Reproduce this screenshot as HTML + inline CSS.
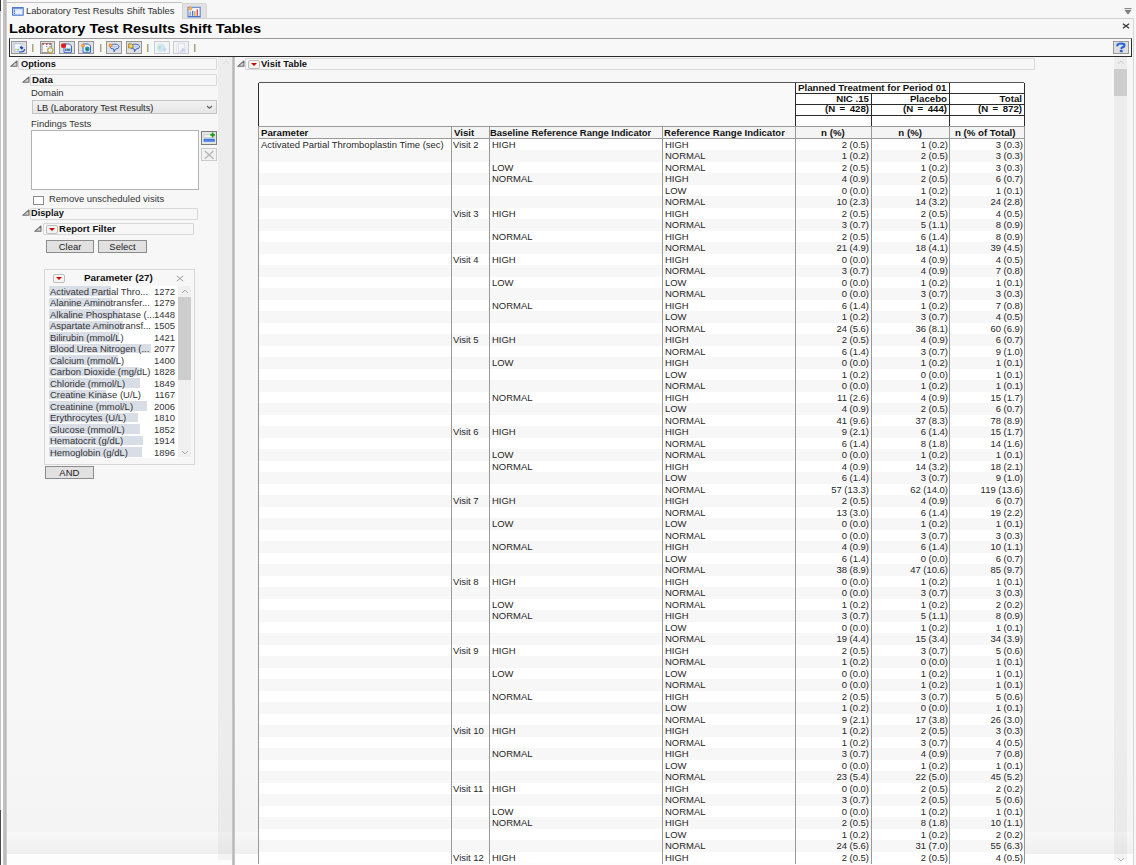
<!DOCTYPE html>
<html><head><meta charset="utf-8"><title>Laboratory Test Results Shift Tables</title>
<style>
html,body{margin:0;padding:0;}
body{width:1136px;height:865px;overflow:hidden;position:relative;background:#f7f7f7;font-family:"Liberation Sans",sans-serif;}
body div{position:absolute;}
body div div, body div svg{position:absolute;}
.t,.b{white-space:nowrap;font-size:8.8px;line-height:11.5px;transform:scaleX(1.075);transform-origin:0 0;}
.b{font-weight:bold;font-size:9px;color:#111;}
.r{transform-origin:100% 0;}
.c{transform-origin:50% 0;}
</style></head><body>
<div style="left:0px;top:0px;width:1.2px;height:865px;background:#c2c2c2"></div>
<div style="left:0px;top:0px;width:1.2px;height:11px;background:#3a3a3a"></div>
<div style="left:0px;top:810px;width:1.2px;height:55px;background:#4a4a4a"></div>
<div style="left:1.2px;top:0px;width:1.8px;height:865px;background:#fdfdfd"></div>
<div style="left:3px;top:0px;width:3.6px;height:865px;background:linear-gradient(90deg,#c6c6c6,#b9b9b9 60%,#d6d6d6)"></div>
<div style="left:6.6px;top:700px;width:1126.4px;height:154px;background:linear-gradient(#f7f7f7,#f4f4f4 86%,#f8f8f8 86%,#efefef)"></div>
<div style="left:6.6px;top:854px;width:1126.4px;height:11px;background:#fdfdfd"></div>
<div style="left:7px;top:2.1px;width:175px;height:16.2px;background:#f8f8f8;border-top:1.5px solid #c2c2c2;box-sizing:border-box"></div>
<div style="left:182px;top:3.2px;width:24.6px;height:15.1px;background:#e2e2e2;border-radius:0 3px 0 0;border:1px solid #d4d4d4;border-bottom:none;box-sizing:border-box"></div>
<div style="left:182px;top:18px;width:952px;height:1px;background:#d0d0d0"></div>
<div style="left:1133px;top:18px;width:1.2px;height:847px;background:#d8d8d8"></div>
<div style="left:12px;top:6.8px"><svg width="12" height="9" viewBox="0 0 12 9"><rect x="0.6" y="0.6" width="10.6" height="7.6" fill="#dce6fa" stroke="#3a6cd0" stroke-width="1"/><rect x="1.1" y="1.1" width="9.6" height="0.9" fill="#6a92dc"/><path d="M2.4 2.6 V7" stroke="#2a4ca0" stroke-width="0.9" stroke-dasharray="1 0.6"/><path d="M4 4.2 H10 M4 6 H10" stroke="#ffffff" stroke-width="0.6"/></svg></div>
<div class="t" style="left:26.2px;top:5.9px;color:#333;transform:scaleX(1.06)">Laboratory Test Results Shift Tables</div>
<div style="left:186.5px;top:5.5px"><svg width="14" height="12" viewBox="0 0 14 12"><rect x="1" y="1.3" width="12.2" height="9.6" fill="#f2f6ff" stroke="#5a86d6" stroke-width="1.1"/><rect x="1" y="9.9" width="12.2" height="1.1" fill="#4a76cc"/><rect x="2.6" y="5.5" width="1.3" height="4.3" fill="#9a9a9a"/><rect x="4.9" y="4.8" width="1.4" height="5" fill="#3a78e0"/><rect x="7.1" y="5.2" width="1.4" height="4.6" fill="#d8a830"/><rect x="9.6" y="3.4" width="1.4" height="6.4" fill="#e04848"/><circle cx="3.3" cy="2.6" r="2" fill="#f4a040"/><circle cx="3.3" cy="2.6" r="0.7" fill="#ffe0b0"/></svg></div>
<div style="left:1124px;top:8px"><svg width="8" height="7" viewBox="0 0 8 7"><rect x="0.5" y="0" width="7" height="1.2" fill="#8a8a8a"/><path d="M0.5 2 L7.5 2 L4 6.7 Z" fill="#808080"/></svg></div>
<div style="left:1121.5px;top:22.5px"><svg width="8" height="6" viewBox="0 0 8 6"><path d="M0.9 0.7 L7.1 5.3 M7.1 0.7 L0.9 5.3" stroke="#3a3a3a" stroke-width="1.35"/></svg></div>
<div class="b" style="left:9px;top:20.7px;font-size:12px;line-height:16px;transform:scaleX(1.218);color:#000">Laboratory Test Results Shift Tables</div>
<div style="left:9px;top:38.3px;width:1123px;height:18.7px;border:1px solid #2a2a2a;border-top:1.7px solid #9a9a9a;border-bottom:1.4px solid #2a2a2a;box-sizing:border-box;background:#f8f8f8"></div>
<div style="left:11.3px;top:41.1px;width:15.6px;height:12.6px;box-sizing:border-box;border:1.2px solid #969696;background:#e1e1e1"><svg width="16" height="13" viewBox="0 0 16 13" style="position:absolute;left:-1.2px;top:-1.2px"><rect x="3" y="2.5" width="8" height="8" fill="#dfe8f8" stroke="#a8bde6" stroke-width="0.7"/><path d="M4 4.5 H10 M4 6.5 H10 M6 3 V10" stroke="#ffffff" stroke-width="0.8"/><rect x="4.2" y="8" width="1.6" height="1.2" fill="#e8c850"/><rect x="6" y="8" width="2" height="1.2" fill="#7cd07a"/><path d="M10 5 L12.5 6.8 L10.8 8.6 L8.6 6.8 Z" fill="#1840b0"/><path d="M13.5 8 Q13.5 11 10 11 L8 11" fill="none" stroke="#2050c0" stroke-width="1.1"/></svg></div>
<div style="left:32.1px;top:43.5px;width:1.1px;height:8px;background:#d49a40;box-shadow:1px 0 0 #a8d8ff"></div>
<div style="left:39.5px;top:41.1px;width:15.6px;height:12.6px;box-sizing:border-box;border:1.2px solid #969696;background:#e1e1e1"><svg width="16" height="13" viewBox="0 0 16 13" style="position:absolute;left:-1.2px;top:-1.2px"><rect x="3" y="2.5" width="9.5" height="9" fill="#f6f6f6" stroke="#8a8a8a" stroke-width="0.8"/><rect x="3.5" y="2.2" width="1.6" height="1.6" fill="#b04040"/><rect x="7" y="2.2" width="1.6" height="1.6" fill="#b04040"/><rect x="10.3" y="2.2" width="1.6" height="1.6" fill="#b04040"/><circle cx="7.8" cy="5.5" r="0.6" fill="#2a70e0"/><circle cx="11" cy="5.5" r="0.6" fill="#2a70e0"/><circle cx="11.3" cy="9.3" r="2.6" fill="#d8f0ff" stroke="#c8a030" stroke-width="1.1"/></svg></div>
<div style="left:59.1px;top:41.1px;width:15.6px;height:12.6px;box-sizing:border-box;border:1.2px solid #969696;background:#e1e1e1"><svg width="16" height="13" viewBox="0 0 16 13" style="position:absolute;left:-1.2px;top:-1.2px"><path d="M5 3 H10.5 L12.5 5 V11.3 H5 Z" fill="#eef4ff" stroke="#2a58c0" stroke-width="0.9"/><rect x="6" y="7.6" width="5.5" height="2.2" fill="#3a6ad0"/><circle cx="7.2" cy="8.7" r="0.6" fill="#f0c020"/><rect x="8.4" y="8.1" width="2.2" height="1.2" rx="0.6" fill="#20b020"/><rect x="2.2" y="2.4" width="4.8" height="4.4" rx="0.8" fill="#e01818"/></svg></div>
<div style="left:78.1px;top:41.1px;width:15.6px;height:12.6px;box-sizing:border-box;border:1.2px solid #969696;background:#e1e1e1"><svg width="16" height="13" viewBox="0 0 16 13" style="position:absolute;left:-1.2px;top:-1.2px"><path d="M5 3 H10.5 L12.5 5 V11.3 H5 Z" fill="#eef4ff" stroke="#2a58c0" stroke-width="0.9"/><circle cx="9.3" cy="8" r="2.4" fill="#2a90e0"/><path d="M8 6.5 Q9.5 6 10.5 7.5 L10 10 Q8.5 9.5 8 8 Z" fill="#1a9050"/><circle cx="5" cy="4.6" r="1.9" fill="#f29030"/><circle cx="5" cy="4.6" r="0.7" fill="#ffe0a0"/></svg></div>
<div style="left:99.5px;top:43.5px;width:1.1px;height:8px;background:#d49a40;box-shadow:1px 0 0 #a8d8ff"></div>
<div style="left:106.3px;top:41.1px;width:15.6px;height:12.6px;box-sizing:border-box;border:1.2px solid #969696;background:#e1e1e1"><svg width="16" height="13" viewBox="0 0 16 13" style="position:absolute;left:-1.2px;top:-1.2px"><path d="M4 5.5 Q4 3.2 8.5 3.2 Q13 3.2 13 5.8 Q13 8 9.5 8 L8 10.8 L7.8 8 Q4 8 4 5.5 Z" fill="#d6e6fa" stroke="#2a58c0" stroke-width="0.9"/><path d="M6 5.8 H11" stroke="#8fb0e8" stroke-width="0.7"/><circle cx="4.6" cy="4.4" r="1.9" fill="#f28a30"/><circle cx="4.6" cy="4.4" r="0.7" fill="#ffd8a0"/></svg></div>
<div style="left:126px;top:41.1px;width:15.6px;height:12.6px;box-sizing:border-box;border:1.2px solid #969696;background:#e1e1e1"><svg width="16" height="13" viewBox="0 0 16 13" style="position:absolute;left:-1.2px;top:-1.2px"><path d="M4.5 5.5 Q4.5 3.2 9 3.2 Q13.5 3.2 13.5 5.8 Q13.5 8 10 8 L8.5 10.8 L8.3 8 Q4.5 8 4.5 5.5 Z" fill="#d6e6fa" stroke="#2a58c0" stroke-width="0.9"/><path d="M7 5.8 H12" stroke="#8fb0e8" stroke-width="0.7"/><path d="M2.6 2.8 H5.8 L7 4 V7 H2.6 Z" fill="#f0d060" stroke="#8a6a10" stroke-width="0.7"/></svg></div>
<div style="left:146.5px;top:43.5px;width:1.1px;height:8px;background:#d49a40;box-shadow:1px 0 0 #a8d8ff"></div>
<div style="left:154.2px;top:41.1px;width:15.6px;height:12.6px;box-sizing:border-box;border:1.2px solid #c9ccd0;background:#f3f3f3"><svg width="16" height="13" viewBox="0 0 16 13" style="position:absolute;left:-1.2px;top:-1.2px"><circle cx="7" cy="6.8" r="4.3" fill="#cde8f2"/><path d="M4 5 Q6 4 7 6 L5.5 9 Z" fill="#b8dcc0"/><path d="M8.5 7.5 H13 L11.3 9.5 V11 H10.2 V9.5 Z" fill="#c6d2f0"/></svg></div>
<div style="left:173.1px;top:41.1px;width:15.6px;height:12.6px;box-sizing:border-box;border:1.2px solid #c9ccd0;background:#f3f3f3"><svg width="16" height="13" viewBox="0 0 16 13" style="position:absolute;left:-1.2px;top:-1.2px"><rect x="5.3" y="2.5" width="6" height="8.5" fill="#f4f6fc" stroke="#d0d8ec" stroke-width="0.7"/><path d="M7 10.5 L10 6.5 L13 10.5 Z" fill="#c8d2ee"/><path d="M3.5 3 V11 M13.8 3 V11" stroke="#e2e2e2" stroke-width="0.6"/></svg></div>
<div style="left:194.1px;top:43.5px;width:1.1px;height:8px;background:#d49a40;box-shadow:1px 0 0 #a8d8ff"></div>
<div style="left:1112.9px;top:40.9px;width:15.9px;height:12.9px;box-sizing:border-box;border:1.2px solid #9a9a9a;background:#e0e0e0"><svg width="16" height="13" viewBox="0 0 16 13" style="position:absolute;left:-1.2px;top:-1.2px"><path d="M4.2 4.5 Q4.8 2.5 8.1 2.5 Q11.7 2.5 11.5 4.5 Q11.3 6 8.7 6.8 L8.5 7.4" fill="none" stroke="#2a62d8" stroke-width="2.1" stroke-linecap="round"/><rect x="6.8" y="9.1" width="2.9" height="2.1" rx="0.5" fill="#2a62d8"/></svg></div>
<div style="left:217.7px;top:57px;width:14.1px;height:803px;background:rgba(0,0,0,0.038)"></div>
<div style="left:222px;top:60px"><svg width="8" height="5" viewBox="0 0 8 5"><path d="M1 4 L4 1 L7 4" fill="none" stroke="#dcdcdc" stroke-width="1"/></svg></div>
<div style="left:231.8px;top:57px;width:3.4px;height:808px;background:linear-gradient(90deg,#d4d4d4,#b4b4b4 40%,#bababa 70%,#dcdcdc)"></div>
<div style="left:18.2px;top:58.2px;width:199.3px;height:12px;border:1px solid #d8d8d8;border-radius:1px;box-sizing:border-box"></div>
<div style="left:10.3px;top:60.1px"><svg width="8" height="7" viewBox="0 0 8 7"><path d="M0.7 6.3 L7 6.3 L7 0.9 Z" fill="#cfcfcf" stroke="#6e6e6e" stroke-width="1.05" stroke-linejoin="round"/></svg></div>
<div class="b" style="left:20.7px;top:58.800000000000004px;transform:scaleX(1.025)">Options</div>
<div style="left:30.4px;top:74.2px;width:187.1px;height:12px;border:1px solid #d8d8d8;border-radius:1px;box-sizing:border-box"></div>
<div style="left:21.5px;top:76.10000000000001px"><svg width="8" height="7" viewBox="0 0 8 7"><path d="M0.7 6.3 L7 6.3 L7 0.9 Z" fill="#cfcfcf" stroke="#6e6e6e" stroke-width="1.05" stroke-linejoin="round"/></svg></div>
<div class="b" style="left:31.9px;top:74.8px;transform:scaleX(1.075)">Data</div>
<div class="t" style="left:31px;top:87.6px;color:#333">Domain</div>
<div style="left:32px;top:100.2px;width:185px;height:13.8px;border:1px solid #c4c4c4;box-sizing:border-box;background:linear-gradient(#f2f2f2,#e6e6e6)"></div>
<div class="t" style="left:37.2px;top:102.8px;color:#222;transform:scaleX(1.045)">LB (Laboratory Test Results)</div>
<div style="left:206px;top:105px"><svg width="7" height="5" viewBox="0 0 7 5"><path d="M1 1 L3.5 3.3 L6 1" fill="none" stroke="#606060" stroke-width="1.2"/></svg></div>
<div class="t" style="left:31px;top:118.5px;color:#333">Findings Tests</div>
<div style="left:30.8px;top:130.4px;width:168px;height:59.4px;border:1px solid #b2b2b2;box-sizing:border-box;background:#fff"></div>
<div style="left:201px;top:131.3px;width:15.6px;height:13.4px;box-sizing:border-box;border:1.2px solid #7c7c7c;background:#e4e4e4"><svg width="16" height="14" viewBox="0 0 16 14" style="position:absolute;left:-1.2px;top:-1.2px"><rect x="3" y="3.8" width="10" height="2.6" fill="#f8f8f8" stroke="#b8b8b8" stroke-width="0.6"/><rect x="2.6" y="7.8" width="11.2" height="3" rx="0.6" fill="#3a72dc"/><path d="M4 9.3 H12" stroke="#a8c4f4" stroke-width="0.5" stroke-dasharray="1 0.8"/><path d="M11.6 1.6 V6.2 M9.3 3.9 H13.9" stroke="#12a012" stroke-width="1.7"/></svg></div>
<div style="left:201px;top:147.5px;width:15.6px;height:13.2px;box-sizing:border-box;border:1px solid #c8ccd2;background:#f2f2f2"><svg width="16" height="14" viewBox="0 0 16 14" style="position:absolute;left:-1px;top:-1px"><path d="M3.8 3 L12.6 10.8 M12.4 3 L3.8 10.8" stroke="#b4b4b4" stroke-width="1.3"/></svg></div>
<div style="left:33px;top:195.5px;width:11px;height:9px;border:1px solid #8a8a8a;box-sizing:border-box;background:#fff"></div>
<div class="t" style="left:48.6px;top:194.4px;color:#333">Remove unscheduled visits</div>
<div style="left:30.4px;top:207.5px;width:167.7px;height:12px;border:1px solid #d8d8d8;border-radius:1px;box-sizing:border-box"></div>
<div style="left:21.5px;top:209.4px"><svg width="8" height="7" viewBox="0 0 8 7"><path d="M0.7 6.3 L7 6.3 L7 0.9 Z" fill="#cfcfcf" stroke="#6e6e6e" stroke-width="1.05" stroke-linejoin="round"/></svg></div>
<div class="b" style="left:31.4px;top:208.1px;transform:scaleX(1.025)">Display</div>
<div style="left:43.1px;top:223.4px;width:151px;height:12px;border:1px solid #d8d8d8;border-radius:1px;box-sizing:border-box"></div>
<div style="left:34.2px;top:225.3px"><svg width="8" height="7" viewBox="0 0 8 7"><path d="M0.7 6.3 L7 6.3 L7 0.9 Z" fill="#cfcfcf" stroke="#6e6e6e" stroke-width="1.05" stroke-linejoin="round"/></svg></div>
<div style="left:45.6px;top:225.1px"><svg width="12" height="9" viewBox="0 0 12 9"><rect x="0.5" y="0.5" width="11" height="8" rx="1.5" fill="#f4f4f4" stroke="#bdbdbd"/><path d="M3 3 L9 3 L6 6 Z" fill="#d00000"/></svg></div>
<div class="b" style="left:58.6px;top:224.0px;transform:scaleX(1.06)">Report Filter</div>
<div style="left:46px;top:240px;width:48px;height:13px;box-sizing:border-box;border:1px solid #8c8c8c;background:#e1e1e1"></div>
<div class="t c" style="left:46px;top:241.6px;width:48px;text-align:center;color:#222">Clear</div>
<div style="left:98px;top:240px;width:49px;height:13px;box-sizing:border-box;border:1px solid #8c8c8c;background:#e1e1e1"></div>
<div class="t c" style="left:98px;top:241.6px;width:49px;text-align:center;color:#222">Select</div>
<div style="left:44.2px;top:269.2px;width:150.5px;height:195.6px;border:1px solid #d6d6d6;box-sizing:border-box"></div>
<div style="left:53px;top:274px"><svg width="12" height="9" viewBox="0 0 12 9"><rect x="0.5" y="0.5" width="11" height="8" rx="1.5" fill="#f4f4f4" stroke="#bdbdbd"/><path d="M3 3 L9 3 L6 6 Z" fill="#d00000"/></svg></div>
<div class="b" style="left:84px;top:273.2px;transform:scaleX(1.1)">Parameter (27)</div>
<div style="left:175.5px;top:274.5px"><svg width="8" height="7" viewBox="0 0 8 7"><path d="M0.8 0.8 L7.2 6.2 M7.2 0.8 L0.8 6.2" stroke="#9a9a9a" stroke-width="1"/></svg></div>
<div style="left:48.5px;top:286px;width:129px;height:171.7px;background:#fff"></div>
<div style="left:48.5px;top:286.0px;width:62.709599999999995px;height:9.7px;background:#d9dde6"></div>
<div class="t" style="left:49.7px;top:286.8px;color:#333">Activated Partial Thro...</div>
<div class="t r" style="left:55.30000000000001px;top:286.8px;width:120px;text-align:right;color:#333">1272</div>
<div style="left:48.5px;top:297.5px;width:63.0547px;height:9.7px;background:#d9dde6"></div>
<div class="t" style="left:49.7px;top:298.3px;color:#333">Alanine Aminotransfer...</div>
<div class="t r" style="left:55.30000000000001px;top:298.3px;width:120px;text-align:right;color:#333">1279</div>
<div style="left:48.5px;top:309.0px;width:71.3864px;height:9.7px;background:#d9dde6"></div>
<div class="t" style="left:49.7px;top:309.8px;color:#333">Alkaline Phosphatase (...</div>
<div class="t r" style="left:55.30000000000001px;top:309.8px;width:120px;text-align:right;color:#333">1448</div>
<div style="left:48.5px;top:320.5px;width:74.1965px;height:9.7px;background:#d9dde6"></div>
<div class="t" style="left:49.7px;top:321.3px;color:#333">Aspartate Aminotransf...</div>
<div class="t r" style="left:55.30000000000001px;top:321.3px;width:120px;text-align:right;color:#333">1505</div>
<div style="left:48.5px;top:332.0px;width:70.05529999999999px;height:9.7px;background:#d9dde6"></div>
<div class="t" style="left:49.7px;top:332.8px;color:#333">Bilirubin (mmol/L)</div>
<div class="t r" style="left:55.30000000000001px;top:332.8px;width:120px;text-align:right;color:#333">1421</div>
<div style="left:48.5px;top:343.5px;width:102.39609999999999px;height:9.7px;background:#d9dde6"></div>
<div class="t" style="left:49.7px;top:344.3px;color:#333">Blood Urea Nitrogen (...</div>
<div class="t r" style="left:55.30000000000001px;top:344.3px;width:120px;text-align:right;color:#333">2077</div>
<div style="left:48.5px;top:355.0px;width:69.02px;height:9.7px;background:#d9dde6"></div>
<div class="t" style="left:49.7px;top:355.8px;color:#333">Calcium (mmol/L)</div>
<div class="t r" style="left:55.30000000000001px;top:355.8px;width:120px;text-align:right;color:#333">1400</div>
<div style="left:48.5px;top:366.5px;width:90.12039999999999px;height:9.7px;background:#d9dde6"></div>
<div class="t" style="left:49.7px;top:367.3px;color:#333">Carbon Dioxide (mg/dL)</div>
<div class="t r" style="left:55.30000000000001px;top:367.3px;width:120px;text-align:right;color:#333">1828</div>
<div style="left:48.5px;top:378.0px;width:91.1557px;height:9.7px;background:#d9dde6"></div>
<div class="t" style="left:49.7px;top:378.8px;color:#333">Chloride (mmol/L)</div>
<div class="t r" style="left:55.30000000000001px;top:378.8px;width:120px;text-align:right;color:#333">1849</div>
<div style="left:48.5px;top:389.5px;width:57.5331px;height:9.7px;background:#d9dde6"></div>
<div class="t" style="left:49.7px;top:390.3px;color:#333">Creatine Kinase (U/L)</div>
<div class="t r" style="left:55.30000000000001px;top:390.3px;width:120px;text-align:right;color:#333">1167</div>
<div style="left:48.5px;top:401.0px;width:98.8958px;height:9.7px;background:#d9dde6"></div>
<div class="t" style="left:49.7px;top:401.8px;color:#333">Creatinine (mmol/L)</div>
<div class="t r" style="left:55.30000000000001px;top:401.8px;width:120px;text-align:right;color:#333">2006</div>
<div style="left:48.5px;top:412.5px;width:89.23299999999999px;height:9.7px;background:#d9dde6"></div>
<div class="t" style="left:49.7px;top:413.3px;color:#333">Erythrocytes (U/L)</div>
<div class="t r" style="left:55.30000000000001px;top:413.3px;width:120px;text-align:right;color:#333">1810</div>
<div style="left:48.5px;top:424.0px;width:91.30359999999999px;height:9.7px;background:#d9dde6"></div>
<div class="t" style="left:49.7px;top:424.8px;color:#333">Glucose (mmol/L)</div>
<div class="t r" style="left:55.30000000000001px;top:424.8px;width:120px;text-align:right;color:#333">1852</div>
<div style="left:48.5px;top:435.5px;width:94.36019999999999px;height:9.7px;background:#d9dde6"></div>
<div class="t" style="left:49.7px;top:436.3px;color:#333">Hematocrit (g/dL)</div>
<div class="t r" style="left:55.30000000000001px;top:436.3px;width:120px;text-align:right;color:#333">1914</div>
<div style="left:48.5px;top:447.0px;width:93.47279999999999px;height:9.7px;background:#d9dde6"></div>
<div class="t" style="left:49.7px;top:447.8px;color:#333">Hemoglobin (g/dL)</div>
<div class="t r" style="left:55.30000000000001px;top:447.8px;width:120px;text-align:right;color:#333">1896</div>
<div style="left:177.6px;top:286px;width:13.2px;height:171px;background:#f0f0f0"></div>
<div style="left:177.6px;top:297px;width:13.2px;height:83px;background:#cdcdcd"></div>
<div style="left:180.5px;top:289px"><svg width="8" height="5" viewBox="0 0 8 5"><path d="M1 4 L4 1 L7 4" fill="none" stroke="#a8a8a8" stroke-width="0.9"/></svg></div>
<div style="left:180.5px;top:450px"><svg width="8" height="5" viewBox="0 0 8 5"><path d="M1 1 L4 4 L7 1" fill="none" stroke="#a8a8a8" stroke-width="0.9"/></svg></div>
<div style="left:45px;top:466.2px;width:48.7px;height:12.8px;box-sizing:border-box;border:1px solid #8c8c8c;background:#e1e1e1"></div>
<div class="t c" style="left:45px;top:467.8px;width:48.7px;text-align:center;color:#222">AND</div>
<div style="left:1113.5px;top:57px;width:13.5px;height:803px;background:rgba(0,0,0,0.038)"></div>
<div style="left:1116.5px;top:857px"><svg width="8" height="5" viewBox="0 0 8 5"><path d="M1 1 L4 4 L7 1" fill="none" stroke="#b8b8b8" stroke-width="1"/></svg></div>
<div style="left:1113.5px;top:68.5px;width:13.5px;height:27.5px;background:#cdcdcd"></div>
<div style="left:1116.5px;top:60px"><svg width="8" height="5" viewBox="0 0 8 5"><path d="M1 4 L4 1 L7 4" fill="none" stroke="#c8c8c8" stroke-width="1"/></svg></div>
<div style="left:245px;top:58.2px;width:789.8px;height:12px;border:1px solid #d8d8d8;border-radius:1px;box-sizing:border-box"></div>
<div style="left:236.5px;top:60.1px"><svg width="8" height="7" viewBox="0 0 8 7"><path d="M0.7 6.3 L7 6.3 L7 0.9 Z" fill="#cfcfcf" stroke="#6e6e6e" stroke-width="1.05" stroke-linejoin="round"/></svg></div>
<div style="left:247.5px;top:59.900000000000006px"><svg width="12" height="9" viewBox="0 0 12 9"><rect x="0.5" y="0.5" width="11" height="8" rx="1.5" fill="#f4f4f4" stroke="#bdbdbd"/><path d="M3 3 L9 3 L6 6 Z" fill="#d00000"/></svg></div>
<div class="b" style="left:260.5px;top:58.800000000000004px;transform:scaleX(1.04)">Visit Table</div>
<div style="left:258.8px;top:82.5px;width:536.5px;height:43.599999999999994px;background:#f9f9f9"></div>
<div style="left:795.3px;top:82.5px;width:229.10000000000014px;height:43.599999999999994px;background:#fff"></div>
<div style="left:258.8px;top:126.1px;width:765.6000000000001px;height:12.400000000000006px;background:#f4f4f4"></div>
<div style="left:258.8px;top:138.5px;width:765.6000000000001px;height:11.5px;background:#ffffff"></div>
<div style="left:258.8px;top:150.0px;width:765.6000000000001px;height:11.5px;background:#f7f7f7"></div>
<div style="left:258.8px;top:161.5px;width:765.6000000000001px;height:11.5px;background:#ffffff"></div>
<div style="left:258.8px;top:173.0px;width:765.6000000000001px;height:11.5px;background:#f7f7f7"></div>
<div style="left:258.8px;top:184.5px;width:765.6000000000001px;height:11.5px;background:#ffffff"></div>
<div style="left:258.8px;top:196.0px;width:765.6000000000001px;height:11.5px;background:#f7f7f7"></div>
<div style="left:258.8px;top:207.5px;width:765.6000000000001px;height:11.5px;background:#ffffff"></div>
<div style="left:258.8px;top:219.0px;width:765.6000000000001px;height:11.5px;background:#f7f7f7"></div>
<div style="left:258.8px;top:230.5px;width:765.6000000000001px;height:11.5px;background:#ffffff"></div>
<div style="left:258.8px;top:242.0px;width:765.6000000000001px;height:11.5px;background:#f7f7f7"></div>
<div style="left:258.8px;top:253.5px;width:765.6000000000001px;height:11.5px;background:#ffffff"></div>
<div style="left:258.8px;top:265.0px;width:765.6000000000001px;height:11.5px;background:#f7f7f7"></div>
<div style="left:258.8px;top:276.5px;width:765.6000000000001px;height:11.5px;background:#ffffff"></div>
<div style="left:258.8px;top:288.0px;width:765.6000000000001px;height:11.5px;background:#f7f7f7"></div>
<div style="left:258.8px;top:299.5px;width:765.6000000000001px;height:11.5px;background:#ffffff"></div>
<div style="left:258.8px;top:311.0px;width:765.6000000000001px;height:11.5px;background:#f7f7f7"></div>
<div style="left:258.8px;top:322.5px;width:765.6000000000001px;height:11.5px;background:#ffffff"></div>
<div style="left:258.8px;top:334.0px;width:765.6000000000001px;height:11.5px;background:#f7f7f7"></div>
<div style="left:258.8px;top:345.5px;width:765.6000000000001px;height:11.5px;background:#ffffff"></div>
<div style="left:258.8px;top:357.0px;width:765.6000000000001px;height:11.5px;background:#f7f7f7"></div>
<div style="left:258.8px;top:368.5px;width:765.6000000000001px;height:11.5px;background:#ffffff"></div>
<div style="left:258.8px;top:380.0px;width:765.6000000000001px;height:11.5px;background:#f7f7f7"></div>
<div style="left:258.8px;top:391.5px;width:765.6000000000001px;height:11.5px;background:#ffffff"></div>
<div style="left:258.8px;top:403.0px;width:765.6000000000001px;height:11.5px;background:#f7f7f7"></div>
<div style="left:258.8px;top:414.5px;width:765.6000000000001px;height:11.5px;background:#ffffff"></div>
<div style="left:258.8px;top:426.0px;width:765.6000000000001px;height:11.5px;background:#f7f7f7"></div>
<div style="left:258.8px;top:437.5px;width:765.6000000000001px;height:11.5px;background:#ffffff"></div>
<div style="left:258.8px;top:449.0px;width:765.6000000000001px;height:11.5px;background:#f7f7f7"></div>
<div style="left:258.8px;top:460.5px;width:765.6000000000001px;height:11.5px;background:#ffffff"></div>
<div style="left:258.8px;top:472.0px;width:765.6000000000001px;height:11.5px;background:#f7f7f7"></div>
<div style="left:258.8px;top:483.5px;width:765.6000000000001px;height:11.5px;background:#ffffff"></div>
<div style="left:258.8px;top:495.0px;width:765.6000000000001px;height:11.5px;background:#f7f7f7"></div>
<div style="left:258.8px;top:506.5px;width:765.6000000000001px;height:11.5px;background:#ffffff"></div>
<div style="left:258.8px;top:518.0px;width:765.6000000000001px;height:11.5px;background:#f7f7f7"></div>
<div style="left:258.8px;top:529.5px;width:765.6000000000001px;height:11.5px;background:#ffffff"></div>
<div style="left:258.8px;top:541.0px;width:765.6000000000001px;height:11.5px;background:#f7f7f7"></div>
<div style="left:258.8px;top:552.5px;width:765.6000000000001px;height:11.5px;background:#ffffff"></div>
<div style="left:258.8px;top:564.0px;width:765.6000000000001px;height:11.5px;background:#f7f7f7"></div>
<div style="left:258.8px;top:575.5px;width:765.6000000000001px;height:11.5px;background:#ffffff"></div>
<div style="left:258.8px;top:587.0px;width:765.6000000000001px;height:11.5px;background:#f7f7f7"></div>
<div style="left:258.8px;top:598.5px;width:765.6000000000001px;height:11.5px;background:#ffffff"></div>
<div style="left:258.8px;top:610.0px;width:765.6000000000001px;height:11.5px;background:#f7f7f7"></div>
<div style="left:258.8px;top:621.5px;width:765.6000000000001px;height:11.5px;background:#ffffff"></div>
<div style="left:258.8px;top:633.0px;width:765.6000000000001px;height:11.5px;background:#f7f7f7"></div>
<div style="left:258.8px;top:644.5px;width:765.6000000000001px;height:11.5px;background:#ffffff"></div>
<div style="left:258.8px;top:656.0px;width:765.6000000000001px;height:11.5px;background:#f7f7f7"></div>
<div style="left:258.8px;top:667.5px;width:765.6000000000001px;height:11.5px;background:#ffffff"></div>
<div style="left:258.8px;top:679.0px;width:765.6000000000001px;height:11.5px;background:#f7f7f7"></div>
<div style="left:258.8px;top:690.5px;width:765.6000000000001px;height:11.5px;background:#ffffff"></div>
<div style="left:258.8px;top:702.0px;width:765.6000000000001px;height:11.5px;background:#f7f7f7"></div>
<div style="left:258.8px;top:713.5px;width:765.6000000000001px;height:11.5px;background:#ffffff"></div>
<div style="left:258.8px;top:725.0px;width:765.6000000000001px;height:11.5px;background:#f7f7f7"></div>
<div style="left:258.8px;top:736.5px;width:765.6000000000001px;height:11.5px;background:#ffffff"></div>
<div style="left:258.8px;top:748.0px;width:765.6000000000001px;height:11.5px;background:#f7f7f7"></div>
<div style="left:258.8px;top:759.5px;width:765.6000000000001px;height:11.5px;background:#ffffff"></div>
<div style="left:258.8px;top:771.0px;width:765.6000000000001px;height:11.5px;background:#f7f7f7"></div>
<div style="left:258.8px;top:782.5px;width:765.6000000000001px;height:11.5px;background:#ffffff"></div>
<div style="left:258.8px;top:794.0px;width:765.6000000000001px;height:11.5px;background:#f7f7f7"></div>
<div style="left:258.8px;top:805.5px;width:765.6000000000001px;height:11.5px;background:#ffffff"></div>
<div style="left:258.8px;top:817.0px;width:765.6000000000001px;height:11.5px;background:#f7f7f7"></div>
<div style="left:258.8px;top:828.5px;width:765.6000000000001px;height:11.5px;background:#ffffff"></div>
<div style="left:258.8px;top:840.0px;width:765.6000000000001px;height:11.5px;background:#f7f7f7"></div>
<div style="left:258.8px;top:851.5px;width:765.6000000000001px;height:11.5px;background:#ffffff"></div>
<div style="left:258.8px;top:82.0px;width:765.6000000000001px;height:1px;background:#555"></div>
<div style="left:258.3px;top:82.5px;width:1px;height:43.599999999999994px;background:#2b2b2b"></div>
<div style="left:1023.9000000000001px;top:82.5px;width:1px;height:43.599999999999994px;background:#2b2b2b"></div>
<div style="left:795.3px;top:92.9px;width:229.10000000000014px;height:1px;background:#2b2b2b"></div>
<div style="left:795.3px;top:103.7px;width:229.10000000000014px;height:1px;background:#2b2b2b"></div>
<div style="left:795.3px;top:114.8px;width:229.10000000000014px;height:1px;background:#2b2b2b"></div>
<div style="left:794.8px;top:82.5px;width:1px;height:43.599999999999994px;background:#2b2b2b"></div>
<div style="left:949.0px;top:82.5px;width:1px;height:43.599999999999994px;background:#2b2b2b"></div>
<div style="left:870.7px;top:93.4px;width:1px;height:32.69999999999999px;background:#2b2b2b"></div>
<div style="left:258.8px;top:125.6px;width:765.6000000000001px;height:1px;background:#999999"></div>
<div style="left:258.8px;top:138.0px;width:765.6000000000001px;height:1px;background:#999999"></div>
<div style="left:258.3px;top:126.1px;width:1px;height:737.9px;background:#999999"></div>
<div style="left:450.9px;top:126.1px;width:1px;height:737.9px;background:#999999"></div>
<div style="left:488.8px;top:126.1px;width:1px;height:737.9px;background:#999999"></div>
<div style="left:662.2px;top:126.1px;width:1px;height:737.9px;background:#999999"></div>
<div style="left:794.8px;top:126.1px;width:1px;height:737.9px;background:#999999"></div>
<div style="left:870.7px;top:126.1px;width:1px;height:737.9px;background:#999999"></div>
<div style="left:949.0px;top:126.1px;width:1px;height:737.9px;background:#999999"></div>
<div style="left:1023.9000000000001px;top:126.1px;width:1px;height:737.9px;background:#999999"></div>
<div class="b" style="left:797.8px;top:82.8px;">Planned Treatment for Period 01</div>
<div class="b r" style="left:748.7px;top:93.9px;width:120px;text-align:right;">NIC .15</div>
<div class="b r" style="left:827.0px;top:93.9px;width:120px;text-align:right;">Placebo</div>
<div class="b r" style="left:901.9000000000001px;top:93.9px;width:120px;text-align:right;">Total</div>
<div class="b r" style="left:748.7px;top:104.4px;width:120px;text-align:right;word-spacing:1.6px">(N = 428)</div>
<div class="b r" style="left:827.0px;top:104.4px;width:120px;text-align:right;word-spacing:1.6px">(N = 444)</div>
<div class="b r" style="left:901.9000000000001px;top:104.4px;width:120px;text-align:right;word-spacing:1.6px">(N = 872)</div>
<div class="b" style="left:261.0px;top:127.6px;">Parameter</div>
<div class="b" style="left:453.5px;top:127.6px;">Visit</div>
<div class="b" style="left:490.1px;top:127.6px;transform:scaleX(1.05)">Baseline Reference Range Indicator</div>
<div class="b" style="left:663.5px;top:127.6px;transform:scaleX(1.06)">Reference Range Indicator</div>
<div class="b c" style="left:795.3px;top:127.6px;width:75.90000000000009px;text-align:center;">n (%)</div>
<div class="b c" style="left:871.2px;top:127.6px;width:78.29999999999995px;text-align:center;">n (%)</div>
<div class="b c" style="left:946.0px;top:127.6px;width:78.40000000000009px;text-align:center;">n (% of Total)</div>
<div class="t" style="left:261.0px;top:139.8px;color:#262626">Activated Partial Thromboplastin Time (sec)</div>
<div class="t" style="left:453.4px;top:139.8px;color:#262626">Visit 2</div>
<div class="t" style="left:491.5px;top:139.8px;color:#262626">HIGH</div>
<div class="t" style="left:664.7px;top:139.8px;color:#262626">HIGH</div>
<div class="t r" style="left:748.9000000000001px;top:139.8px;width:120px;text-align:right;color:#262626">2 (0.5)</div>
<div class="t r" style="left:827.6px;top:139.8px;width:120px;text-align:right;color:#262626">1 (0.2)</div>
<div class="t r" style="left:903.3000000000001px;top:139.8px;width:120px;text-align:right;color:#262626">3 (0.3)</div>
<div class="t" style="left:664.7px;top:151.3px;color:#262626">NORMAL</div>
<div class="t r" style="left:748.9000000000001px;top:151.3px;width:120px;text-align:right;color:#262626">1 (0.2)</div>
<div class="t r" style="left:827.6px;top:151.3px;width:120px;text-align:right;color:#262626">2 (0.5)</div>
<div class="t r" style="left:903.3000000000001px;top:151.3px;width:120px;text-align:right;color:#262626">3 (0.3)</div>
<div class="t" style="left:491.5px;top:162.8px;color:#262626">LOW</div>
<div class="t" style="left:664.7px;top:162.8px;color:#262626">NORMAL</div>
<div class="t r" style="left:748.9000000000001px;top:162.8px;width:120px;text-align:right;color:#262626">2 (0.5)</div>
<div class="t r" style="left:827.6px;top:162.8px;width:120px;text-align:right;color:#262626">1 (0.2)</div>
<div class="t r" style="left:903.3000000000001px;top:162.8px;width:120px;text-align:right;color:#262626">3 (0.3)</div>
<div class="t" style="left:491.5px;top:174.3px;color:#262626">NORMAL</div>
<div class="t" style="left:664.7px;top:174.3px;color:#262626">HIGH</div>
<div class="t r" style="left:748.9000000000001px;top:174.3px;width:120px;text-align:right;color:#262626">4 (0.9)</div>
<div class="t r" style="left:827.6px;top:174.3px;width:120px;text-align:right;color:#262626">2 (0.5)</div>
<div class="t r" style="left:903.3000000000001px;top:174.3px;width:120px;text-align:right;color:#262626">6 (0.7)</div>
<div class="t" style="left:664.7px;top:185.8px;color:#262626">LOW</div>
<div class="t r" style="left:748.9000000000001px;top:185.8px;width:120px;text-align:right;color:#262626">0 (0.0)</div>
<div class="t r" style="left:827.6px;top:185.8px;width:120px;text-align:right;color:#262626">1 (0.2)</div>
<div class="t r" style="left:903.3000000000001px;top:185.8px;width:120px;text-align:right;color:#262626">1 (0.1)</div>
<div class="t" style="left:664.7px;top:197.3px;color:#262626">NORMAL</div>
<div class="t r" style="left:748.9000000000001px;top:197.3px;width:120px;text-align:right;color:#262626">10 (2.3)</div>
<div class="t r" style="left:827.6px;top:197.3px;width:120px;text-align:right;color:#262626">14 (3.2)</div>
<div class="t r" style="left:903.3000000000001px;top:197.3px;width:120px;text-align:right;color:#262626">24 (2.8)</div>
<div class="t" style="left:453.4px;top:208.8px;color:#262626">Visit 3</div>
<div class="t" style="left:491.5px;top:208.8px;color:#262626">HIGH</div>
<div class="t" style="left:664.7px;top:208.8px;color:#262626">HIGH</div>
<div class="t r" style="left:748.9000000000001px;top:208.8px;width:120px;text-align:right;color:#262626">2 (0.5)</div>
<div class="t r" style="left:827.6px;top:208.8px;width:120px;text-align:right;color:#262626">2 (0.5)</div>
<div class="t r" style="left:903.3000000000001px;top:208.8px;width:120px;text-align:right;color:#262626">4 (0.5)</div>
<div class="t" style="left:664.7px;top:220.3px;color:#262626">NORMAL</div>
<div class="t r" style="left:748.9000000000001px;top:220.3px;width:120px;text-align:right;color:#262626">3 (0.7)</div>
<div class="t r" style="left:827.6px;top:220.3px;width:120px;text-align:right;color:#262626">5 (1.1)</div>
<div class="t r" style="left:903.3000000000001px;top:220.3px;width:120px;text-align:right;color:#262626">8 (0.9)</div>
<div class="t" style="left:491.5px;top:231.8px;color:#262626">NORMAL</div>
<div class="t" style="left:664.7px;top:231.8px;color:#262626">HIGH</div>
<div class="t r" style="left:748.9000000000001px;top:231.8px;width:120px;text-align:right;color:#262626">2 (0.5)</div>
<div class="t r" style="left:827.6px;top:231.8px;width:120px;text-align:right;color:#262626">6 (1.4)</div>
<div class="t r" style="left:903.3000000000001px;top:231.8px;width:120px;text-align:right;color:#262626">8 (0.9)</div>
<div class="t" style="left:664.7px;top:243.3px;color:#262626">NORMAL</div>
<div class="t r" style="left:748.9000000000001px;top:243.3px;width:120px;text-align:right;color:#262626">21 (4.9)</div>
<div class="t r" style="left:827.6px;top:243.3px;width:120px;text-align:right;color:#262626">18 (4.1)</div>
<div class="t r" style="left:903.3000000000001px;top:243.3px;width:120px;text-align:right;color:#262626">39 (4.5)</div>
<div class="t" style="left:453.4px;top:254.8px;color:#262626">Visit 4</div>
<div class="t" style="left:491.5px;top:254.8px;color:#262626">HIGH</div>
<div class="t" style="left:664.7px;top:254.8px;color:#262626">HIGH</div>
<div class="t r" style="left:748.9000000000001px;top:254.8px;width:120px;text-align:right;color:#262626">0 (0.0)</div>
<div class="t r" style="left:827.6px;top:254.8px;width:120px;text-align:right;color:#262626">4 (0.9)</div>
<div class="t r" style="left:903.3000000000001px;top:254.8px;width:120px;text-align:right;color:#262626">4 (0.5)</div>
<div class="t" style="left:664.7px;top:266.3px;color:#262626">NORMAL</div>
<div class="t r" style="left:748.9000000000001px;top:266.3px;width:120px;text-align:right;color:#262626">3 (0.7)</div>
<div class="t r" style="left:827.6px;top:266.3px;width:120px;text-align:right;color:#262626">4 (0.9)</div>
<div class="t r" style="left:903.3000000000001px;top:266.3px;width:120px;text-align:right;color:#262626">7 (0.8)</div>
<div class="t" style="left:491.5px;top:277.8px;color:#262626">LOW</div>
<div class="t" style="left:664.7px;top:277.8px;color:#262626">LOW</div>
<div class="t r" style="left:748.9000000000001px;top:277.8px;width:120px;text-align:right;color:#262626">0 (0.0)</div>
<div class="t r" style="left:827.6px;top:277.8px;width:120px;text-align:right;color:#262626">1 (0.2)</div>
<div class="t r" style="left:903.3000000000001px;top:277.8px;width:120px;text-align:right;color:#262626">1 (0.1)</div>
<div class="t" style="left:664.7px;top:289.3px;color:#262626">NORMAL</div>
<div class="t r" style="left:748.9000000000001px;top:289.3px;width:120px;text-align:right;color:#262626">0 (0.0)</div>
<div class="t r" style="left:827.6px;top:289.3px;width:120px;text-align:right;color:#262626">3 (0.7)</div>
<div class="t r" style="left:903.3000000000001px;top:289.3px;width:120px;text-align:right;color:#262626">3 (0.3)</div>
<div class="t" style="left:491.5px;top:300.8px;color:#262626">NORMAL</div>
<div class="t" style="left:664.7px;top:300.8px;color:#262626">HIGH</div>
<div class="t r" style="left:748.9000000000001px;top:300.8px;width:120px;text-align:right;color:#262626">6 (1.4)</div>
<div class="t r" style="left:827.6px;top:300.8px;width:120px;text-align:right;color:#262626">1 (0.2)</div>
<div class="t r" style="left:903.3000000000001px;top:300.8px;width:120px;text-align:right;color:#262626">7 (0.8)</div>
<div class="t" style="left:664.7px;top:312.3px;color:#262626">LOW</div>
<div class="t r" style="left:748.9000000000001px;top:312.3px;width:120px;text-align:right;color:#262626">1 (0.2)</div>
<div class="t r" style="left:827.6px;top:312.3px;width:120px;text-align:right;color:#262626">3 (0.7)</div>
<div class="t r" style="left:903.3000000000001px;top:312.3px;width:120px;text-align:right;color:#262626">4 (0.5)</div>
<div class="t" style="left:664.7px;top:323.8px;color:#262626">NORMAL</div>
<div class="t r" style="left:748.9000000000001px;top:323.8px;width:120px;text-align:right;color:#262626">24 (5.6)</div>
<div class="t r" style="left:827.6px;top:323.8px;width:120px;text-align:right;color:#262626">36 (8.1)</div>
<div class="t r" style="left:903.3000000000001px;top:323.8px;width:120px;text-align:right;color:#262626">60 (6.9)</div>
<div class="t" style="left:453.4px;top:335.3px;color:#262626">Visit 5</div>
<div class="t" style="left:491.5px;top:335.3px;color:#262626">HIGH</div>
<div class="t" style="left:664.7px;top:335.3px;color:#262626">HIGH</div>
<div class="t r" style="left:748.9000000000001px;top:335.3px;width:120px;text-align:right;color:#262626">2 (0.5)</div>
<div class="t r" style="left:827.6px;top:335.3px;width:120px;text-align:right;color:#262626">4 (0.9)</div>
<div class="t r" style="left:903.3000000000001px;top:335.3px;width:120px;text-align:right;color:#262626">6 (0.7)</div>
<div class="t" style="left:664.7px;top:346.8px;color:#262626">NORMAL</div>
<div class="t r" style="left:748.9000000000001px;top:346.8px;width:120px;text-align:right;color:#262626">6 (1.4)</div>
<div class="t r" style="left:827.6px;top:346.8px;width:120px;text-align:right;color:#262626">3 (0.7)</div>
<div class="t r" style="left:903.3000000000001px;top:346.8px;width:120px;text-align:right;color:#262626">9 (1.0)</div>
<div class="t" style="left:491.5px;top:358.3px;color:#262626">LOW</div>
<div class="t" style="left:664.7px;top:358.3px;color:#262626">HIGH</div>
<div class="t r" style="left:748.9000000000001px;top:358.3px;width:120px;text-align:right;color:#262626">0 (0.0)</div>
<div class="t r" style="left:827.6px;top:358.3px;width:120px;text-align:right;color:#262626">1 (0.2)</div>
<div class="t r" style="left:903.3000000000001px;top:358.3px;width:120px;text-align:right;color:#262626">1 (0.1)</div>
<div class="t" style="left:664.7px;top:369.8px;color:#262626">LOW</div>
<div class="t r" style="left:748.9000000000001px;top:369.8px;width:120px;text-align:right;color:#262626">1 (0.2)</div>
<div class="t r" style="left:827.6px;top:369.8px;width:120px;text-align:right;color:#262626">0 (0.0)</div>
<div class="t r" style="left:903.3000000000001px;top:369.8px;width:120px;text-align:right;color:#262626">1 (0.1)</div>
<div class="t" style="left:664.7px;top:381.3px;color:#262626">NORMAL</div>
<div class="t r" style="left:748.9000000000001px;top:381.3px;width:120px;text-align:right;color:#262626">0 (0.0)</div>
<div class="t r" style="left:827.6px;top:381.3px;width:120px;text-align:right;color:#262626">1 (0.2)</div>
<div class="t r" style="left:903.3000000000001px;top:381.3px;width:120px;text-align:right;color:#262626">1 (0.1)</div>
<div class="t" style="left:491.5px;top:392.8px;color:#262626">NORMAL</div>
<div class="t" style="left:664.7px;top:392.8px;color:#262626">HIGH</div>
<div class="t r" style="left:748.9000000000001px;top:392.8px;width:120px;text-align:right;color:#262626">11 (2.6)</div>
<div class="t r" style="left:827.6px;top:392.8px;width:120px;text-align:right;color:#262626">4 (0.9)</div>
<div class="t r" style="left:903.3000000000001px;top:392.8px;width:120px;text-align:right;color:#262626">15 (1.7)</div>
<div class="t" style="left:664.7px;top:404.3px;color:#262626">LOW</div>
<div class="t r" style="left:748.9000000000001px;top:404.3px;width:120px;text-align:right;color:#262626">4 (0.9)</div>
<div class="t r" style="left:827.6px;top:404.3px;width:120px;text-align:right;color:#262626">2 (0.5)</div>
<div class="t r" style="left:903.3000000000001px;top:404.3px;width:120px;text-align:right;color:#262626">6 (0.7)</div>
<div class="t" style="left:664.7px;top:415.8px;color:#262626">NORMAL</div>
<div class="t r" style="left:748.9000000000001px;top:415.8px;width:120px;text-align:right;color:#262626">41 (9.6)</div>
<div class="t r" style="left:827.6px;top:415.8px;width:120px;text-align:right;color:#262626">37 (8.3)</div>
<div class="t r" style="left:903.3000000000001px;top:415.8px;width:120px;text-align:right;color:#262626">78 (8.9)</div>
<div class="t" style="left:453.4px;top:427.3px;color:#262626">Visit 6</div>
<div class="t" style="left:491.5px;top:427.3px;color:#262626">HIGH</div>
<div class="t" style="left:664.7px;top:427.3px;color:#262626">HIGH</div>
<div class="t r" style="left:748.9000000000001px;top:427.3px;width:120px;text-align:right;color:#262626">9 (2.1)</div>
<div class="t r" style="left:827.6px;top:427.3px;width:120px;text-align:right;color:#262626">6 (1.4)</div>
<div class="t r" style="left:903.3000000000001px;top:427.3px;width:120px;text-align:right;color:#262626">15 (1.7)</div>
<div class="t" style="left:664.7px;top:438.8px;color:#262626">NORMAL</div>
<div class="t r" style="left:748.9000000000001px;top:438.8px;width:120px;text-align:right;color:#262626">6 (1.4)</div>
<div class="t r" style="left:827.6px;top:438.8px;width:120px;text-align:right;color:#262626">8 (1.8)</div>
<div class="t r" style="left:903.3000000000001px;top:438.8px;width:120px;text-align:right;color:#262626">14 (1.6)</div>
<div class="t" style="left:491.5px;top:450.3px;color:#262626">LOW</div>
<div class="t" style="left:664.7px;top:450.3px;color:#262626">NORMAL</div>
<div class="t r" style="left:748.9000000000001px;top:450.3px;width:120px;text-align:right;color:#262626">0 (0.0)</div>
<div class="t r" style="left:827.6px;top:450.3px;width:120px;text-align:right;color:#262626">1 (0.2)</div>
<div class="t r" style="left:903.3000000000001px;top:450.3px;width:120px;text-align:right;color:#262626">1 (0.1)</div>
<div class="t" style="left:491.5px;top:461.8px;color:#262626">NORMAL</div>
<div class="t" style="left:664.7px;top:461.8px;color:#262626">HIGH</div>
<div class="t r" style="left:748.9000000000001px;top:461.8px;width:120px;text-align:right;color:#262626">4 (0.9)</div>
<div class="t r" style="left:827.6px;top:461.8px;width:120px;text-align:right;color:#262626">14 (3.2)</div>
<div class="t r" style="left:903.3000000000001px;top:461.8px;width:120px;text-align:right;color:#262626">18 (2.1)</div>
<div class="t" style="left:664.7px;top:473.3px;color:#262626">LOW</div>
<div class="t r" style="left:748.9000000000001px;top:473.3px;width:120px;text-align:right;color:#262626">6 (1.4)</div>
<div class="t r" style="left:827.6px;top:473.3px;width:120px;text-align:right;color:#262626">3 (0.7)</div>
<div class="t r" style="left:903.3000000000001px;top:473.3px;width:120px;text-align:right;color:#262626">9 (1.0)</div>
<div class="t" style="left:664.7px;top:484.8px;color:#262626">NORMAL</div>
<div class="t r" style="left:748.9000000000001px;top:484.8px;width:120px;text-align:right;color:#262626">57 (13.3)</div>
<div class="t r" style="left:827.6px;top:484.8px;width:120px;text-align:right;color:#262626">62 (14.0)</div>
<div class="t r" style="left:903.3000000000001px;top:484.8px;width:120px;text-align:right;color:#262626">119 (13.6)</div>
<div class="t" style="left:453.4px;top:496.3px;color:#262626">Visit 7</div>
<div class="t" style="left:491.5px;top:496.3px;color:#262626">HIGH</div>
<div class="t" style="left:664.7px;top:496.3px;color:#262626">HIGH</div>
<div class="t r" style="left:748.9000000000001px;top:496.3px;width:120px;text-align:right;color:#262626">2 (0.5)</div>
<div class="t r" style="left:827.6px;top:496.3px;width:120px;text-align:right;color:#262626">4 (0.9)</div>
<div class="t r" style="left:903.3000000000001px;top:496.3px;width:120px;text-align:right;color:#262626">6 (0.7)</div>
<div class="t" style="left:664.7px;top:507.8px;color:#262626">NORMAL</div>
<div class="t r" style="left:748.9000000000001px;top:507.8px;width:120px;text-align:right;color:#262626">13 (3.0)</div>
<div class="t r" style="left:827.6px;top:507.8px;width:120px;text-align:right;color:#262626">6 (1.4)</div>
<div class="t r" style="left:903.3000000000001px;top:507.8px;width:120px;text-align:right;color:#262626">19 (2.2)</div>
<div class="t" style="left:491.5px;top:519.3px;color:#262626">LOW</div>
<div class="t" style="left:664.7px;top:519.3px;color:#262626">LOW</div>
<div class="t r" style="left:748.9000000000001px;top:519.3px;width:120px;text-align:right;color:#262626">0 (0.0)</div>
<div class="t r" style="left:827.6px;top:519.3px;width:120px;text-align:right;color:#262626">1 (0.2)</div>
<div class="t r" style="left:903.3000000000001px;top:519.3px;width:120px;text-align:right;color:#262626">1 (0.1)</div>
<div class="t" style="left:664.7px;top:530.8px;color:#262626">NORMAL</div>
<div class="t r" style="left:748.9000000000001px;top:530.8px;width:120px;text-align:right;color:#262626">0 (0.0)</div>
<div class="t r" style="left:827.6px;top:530.8px;width:120px;text-align:right;color:#262626">3 (0.7)</div>
<div class="t r" style="left:903.3000000000001px;top:530.8px;width:120px;text-align:right;color:#262626">3 (0.3)</div>
<div class="t" style="left:491.5px;top:542.3px;color:#262626">NORMAL</div>
<div class="t" style="left:664.7px;top:542.3px;color:#262626">HIGH</div>
<div class="t r" style="left:748.9000000000001px;top:542.3px;width:120px;text-align:right;color:#262626">4 (0.9)</div>
<div class="t r" style="left:827.6px;top:542.3px;width:120px;text-align:right;color:#262626">6 (1.4)</div>
<div class="t r" style="left:903.3000000000001px;top:542.3px;width:120px;text-align:right;color:#262626">10 (1.1)</div>
<div class="t" style="left:664.7px;top:553.8px;color:#262626">LOW</div>
<div class="t r" style="left:748.9000000000001px;top:553.8px;width:120px;text-align:right;color:#262626">6 (1.4)</div>
<div class="t r" style="left:827.6px;top:553.8px;width:120px;text-align:right;color:#262626">0 (0.0)</div>
<div class="t r" style="left:903.3000000000001px;top:553.8px;width:120px;text-align:right;color:#262626">6 (0.7)</div>
<div class="t" style="left:664.7px;top:565.3px;color:#262626">NORMAL</div>
<div class="t r" style="left:748.9000000000001px;top:565.3px;width:120px;text-align:right;color:#262626">38 (8.9)</div>
<div class="t r" style="left:827.6px;top:565.3px;width:120px;text-align:right;color:#262626">47 (10.6)</div>
<div class="t r" style="left:903.3000000000001px;top:565.3px;width:120px;text-align:right;color:#262626">85 (9.7)</div>
<div class="t" style="left:453.4px;top:576.8px;color:#262626">Visit 8</div>
<div class="t" style="left:491.5px;top:576.8px;color:#262626">HIGH</div>
<div class="t" style="left:664.7px;top:576.8px;color:#262626">HIGH</div>
<div class="t r" style="left:748.9000000000001px;top:576.8px;width:120px;text-align:right;color:#262626">0 (0.0)</div>
<div class="t r" style="left:827.6px;top:576.8px;width:120px;text-align:right;color:#262626">1 (0.2)</div>
<div class="t r" style="left:903.3000000000001px;top:576.8px;width:120px;text-align:right;color:#262626">1 (0.1)</div>
<div class="t" style="left:664.7px;top:588.3px;color:#262626">NORMAL</div>
<div class="t r" style="left:748.9000000000001px;top:588.3px;width:120px;text-align:right;color:#262626">0 (0.0)</div>
<div class="t r" style="left:827.6px;top:588.3px;width:120px;text-align:right;color:#262626">3 (0.7)</div>
<div class="t r" style="left:903.3000000000001px;top:588.3px;width:120px;text-align:right;color:#262626">3 (0.3)</div>
<div class="t" style="left:491.5px;top:599.8px;color:#262626">LOW</div>
<div class="t" style="left:664.7px;top:599.8px;color:#262626">NORMAL</div>
<div class="t r" style="left:748.9000000000001px;top:599.8px;width:120px;text-align:right;color:#262626">1 (0.2)</div>
<div class="t r" style="left:827.6px;top:599.8px;width:120px;text-align:right;color:#262626">1 (0.2)</div>
<div class="t r" style="left:903.3000000000001px;top:599.8px;width:120px;text-align:right;color:#262626">2 (0.2)</div>
<div class="t" style="left:491.5px;top:611.3px;color:#262626">NORMAL</div>
<div class="t" style="left:664.7px;top:611.3px;color:#262626">HIGH</div>
<div class="t r" style="left:748.9000000000001px;top:611.3px;width:120px;text-align:right;color:#262626">3 (0.7)</div>
<div class="t r" style="left:827.6px;top:611.3px;width:120px;text-align:right;color:#262626">5 (1.1)</div>
<div class="t r" style="left:903.3000000000001px;top:611.3px;width:120px;text-align:right;color:#262626">8 (0.9)</div>
<div class="t" style="left:664.7px;top:622.8px;color:#262626">LOW</div>
<div class="t r" style="left:748.9000000000001px;top:622.8px;width:120px;text-align:right;color:#262626">0 (0.0)</div>
<div class="t r" style="left:827.6px;top:622.8px;width:120px;text-align:right;color:#262626">1 (0.2)</div>
<div class="t r" style="left:903.3000000000001px;top:622.8px;width:120px;text-align:right;color:#262626">1 (0.1)</div>
<div class="t" style="left:664.7px;top:634.3px;color:#262626">NORMAL</div>
<div class="t r" style="left:748.9000000000001px;top:634.3px;width:120px;text-align:right;color:#262626">19 (4.4)</div>
<div class="t r" style="left:827.6px;top:634.3px;width:120px;text-align:right;color:#262626">15 (3.4)</div>
<div class="t r" style="left:903.3000000000001px;top:634.3px;width:120px;text-align:right;color:#262626">34 (3.9)</div>
<div class="t" style="left:453.4px;top:645.8px;color:#262626">Visit 9</div>
<div class="t" style="left:491.5px;top:645.8px;color:#262626">HIGH</div>
<div class="t" style="left:664.7px;top:645.8px;color:#262626">HIGH</div>
<div class="t r" style="left:748.9000000000001px;top:645.8px;width:120px;text-align:right;color:#262626">2 (0.5)</div>
<div class="t r" style="left:827.6px;top:645.8px;width:120px;text-align:right;color:#262626">3 (0.7)</div>
<div class="t r" style="left:903.3000000000001px;top:645.8px;width:120px;text-align:right;color:#262626">5 (0.6)</div>
<div class="t" style="left:664.7px;top:657.3px;color:#262626">NORMAL</div>
<div class="t r" style="left:748.9000000000001px;top:657.3px;width:120px;text-align:right;color:#262626">1 (0.2)</div>
<div class="t r" style="left:827.6px;top:657.3px;width:120px;text-align:right;color:#262626">0 (0.0)</div>
<div class="t r" style="left:903.3000000000001px;top:657.3px;width:120px;text-align:right;color:#262626">1 (0.1)</div>
<div class="t" style="left:491.5px;top:668.8px;color:#262626">LOW</div>
<div class="t" style="left:664.7px;top:668.8px;color:#262626">LOW</div>
<div class="t r" style="left:748.9000000000001px;top:668.8px;width:120px;text-align:right;color:#262626">0 (0.0)</div>
<div class="t r" style="left:827.6px;top:668.8px;width:120px;text-align:right;color:#262626">1 (0.2)</div>
<div class="t r" style="left:903.3000000000001px;top:668.8px;width:120px;text-align:right;color:#262626">1 (0.1)</div>
<div class="t" style="left:664.7px;top:680.3px;color:#262626">NORMAL</div>
<div class="t r" style="left:748.9000000000001px;top:680.3px;width:120px;text-align:right;color:#262626">0 (0.0)</div>
<div class="t r" style="left:827.6px;top:680.3px;width:120px;text-align:right;color:#262626">1 (0.2)</div>
<div class="t r" style="left:903.3000000000001px;top:680.3px;width:120px;text-align:right;color:#262626">1 (0.1)</div>
<div class="t" style="left:491.5px;top:691.8px;color:#262626">NORMAL</div>
<div class="t" style="left:664.7px;top:691.8px;color:#262626">HIGH</div>
<div class="t r" style="left:748.9000000000001px;top:691.8px;width:120px;text-align:right;color:#262626">2 (0.5)</div>
<div class="t r" style="left:827.6px;top:691.8px;width:120px;text-align:right;color:#262626">3 (0.7)</div>
<div class="t r" style="left:903.3000000000001px;top:691.8px;width:120px;text-align:right;color:#262626">5 (0.6)</div>
<div class="t" style="left:664.7px;top:703.3px;color:#262626">LOW</div>
<div class="t r" style="left:748.9000000000001px;top:703.3px;width:120px;text-align:right;color:#262626">1 (0.2)</div>
<div class="t r" style="left:827.6px;top:703.3px;width:120px;text-align:right;color:#262626">0 (0.0)</div>
<div class="t r" style="left:903.3000000000001px;top:703.3px;width:120px;text-align:right;color:#262626">1 (0.1)</div>
<div class="t" style="left:664.7px;top:714.8px;color:#262626">NORMAL</div>
<div class="t r" style="left:748.9000000000001px;top:714.8px;width:120px;text-align:right;color:#262626">9 (2.1)</div>
<div class="t r" style="left:827.6px;top:714.8px;width:120px;text-align:right;color:#262626">17 (3.8)</div>
<div class="t r" style="left:903.3000000000001px;top:714.8px;width:120px;text-align:right;color:#262626">26 (3.0)</div>
<div class="t" style="left:453.4px;top:726.3px;color:#262626">Visit 10</div>
<div class="t" style="left:491.5px;top:726.3px;color:#262626">HIGH</div>
<div class="t" style="left:664.7px;top:726.3px;color:#262626">HIGH</div>
<div class="t r" style="left:748.9000000000001px;top:726.3px;width:120px;text-align:right;color:#262626">1 (0.2)</div>
<div class="t r" style="left:827.6px;top:726.3px;width:120px;text-align:right;color:#262626">2 (0.5)</div>
<div class="t r" style="left:903.3000000000001px;top:726.3px;width:120px;text-align:right;color:#262626">3 (0.3)</div>
<div class="t" style="left:664.7px;top:737.8px;color:#262626">NORMAL</div>
<div class="t r" style="left:748.9000000000001px;top:737.8px;width:120px;text-align:right;color:#262626">1 (0.2)</div>
<div class="t r" style="left:827.6px;top:737.8px;width:120px;text-align:right;color:#262626">3 (0.7)</div>
<div class="t r" style="left:903.3000000000001px;top:737.8px;width:120px;text-align:right;color:#262626">4 (0.5)</div>
<div class="t" style="left:491.5px;top:749.3px;color:#262626">NORMAL</div>
<div class="t" style="left:664.7px;top:749.3px;color:#262626">HIGH</div>
<div class="t r" style="left:748.9000000000001px;top:749.3px;width:120px;text-align:right;color:#262626">3 (0.7)</div>
<div class="t r" style="left:827.6px;top:749.3px;width:120px;text-align:right;color:#262626">4 (0.9)</div>
<div class="t r" style="left:903.3000000000001px;top:749.3px;width:120px;text-align:right;color:#262626">7 (0.8)</div>
<div class="t" style="left:664.7px;top:760.8px;color:#262626">LOW</div>
<div class="t r" style="left:748.9000000000001px;top:760.8px;width:120px;text-align:right;color:#262626">0 (0.0)</div>
<div class="t r" style="left:827.6px;top:760.8px;width:120px;text-align:right;color:#262626">1 (0.2)</div>
<div class="t r" style="left:903.3000000000001px;top:760.8px;width:120px;text-align:right;color:#262626">1 (0.1)</div>
<div class="t" style="left:664.7px;top:772.3px;color:#262626">NORMAL</div>
<div class="t r" style="left:748.9000000000001px;top:772.3px;width:120px;text-align:right;color:#262626">23 (5.4)</div>
<div class="t r" style="left:827.6px;top:772.3px;width:120px;text-align:right;color:#262626">22 (5.0)</div>
<div class="t r" style="left:903.3000000000001px;top:772.3px;width:120px;text-align:right;color:#262626">45 (5.2)</div>
<div class="t" style="left:453.4px;top:783.8px;color:#262626">Visit 11</div>
<div class="t" style="left:491.5px;top:783.8px;color:#262626">HIGH</div>
<div class="t" style="left:664.7px;top:783.8px;color:#262626">HIGH</div>
<div class="t r" style="left:748.9000000000001px;top:783.8px;width:120px;text-align:right;color:#262626">0 (0.0)</div>
<div class="t r" style="left:827.6px;top:783.8px;width:120px;text-align:right;color:#262626">2 (0.5)</div>
<div class="t r" style="left:903.3000000000001px;top:783.8px;width:120px;text-align:right;color:#262626">2 (0.2)</div>
<div class="t" style="left:664.7px;top:795.3px;color:#262626">NORMAL</div>
<div class="t r" style="left:748.9000000000001px;top:795.3px;width:120px;text-align:right;color:#262626">3 (0.7)</div>
<div class="t r" style="left:827.6px;top:795.3px;width:120px;text-align:right;color:#262626">2 (0.5)</div>
<div class="t r" style="left:903.3000000000001px;top:795.3px;width:120px;text-align:right;color:#262626">5 (0.6)</div>
<div class="t" style="left:491.5px;top:806.8px;color:#262626">LOW</div>
<div class="t" style="left:664.7px;top:806.8px;color:#262626">NORMAL</div>
<div class="t r" style="left:748.9000000000001px;top:806.8px;width:120px;text-align:right;color:#262626">0 (0.0)</div>
<div class="t r" style="left:827.6px;top:806.8px;width:120px;text-align:right;color:#262626">1 (0.2)</div>
<div class="t r" style="left:903.3000000000001px;top:806.8px;width:120px;text-align:right;color:#262626">1 (0.1)</div>
<div class="t" style="left:491.5px;top:818.3px;color:#262626">NORMAL</div>
<div class="t" style="left:664.7px;top:818.3px;color:#262626">HIGH</div>
<div class="t r" style="left:748.9000000000001px;top:818.3px;width:120px;text-align:right;color:#262626">2 (0.5)</div>
<div class="t r" style="left:827.6px;top:818.3px;width:120px;text-align:right;color:#262626">8 (1.8)</div>
<div class="t r" style="left:903.3000000000001px;top:818.3px;width:120px;text-align:right;color:#262626">10 (1.1)</div>
<div class="t" style="left:664.7px;top:829.8px;color:#262626">LOW</div>
<div class="t r" style="left:748.9000000000001px;top:829.8px;width:120px;text-align:right;color:#262626">1 (0.2)</div>
<div class="t r" style="left:827.6px;top:829.8px;width:120px;text-align:right;color:#262626">1 (0.2)</div>
<div class="t r" style="left:903.3000000000001px;top:829.8px;width:120px;text-align:right;color:#262626">2 (0.2)</div>
<div class="t" style="left:664.7px;top:841.3px;color:#262626">NORMAL</div>
<div class="t r" style="left:748.9000000000001px;top:841.3px;width:120px;text-align:right;color:#262626">24 (5.6)</div>
<div class="t r" style="left:827.6px;top:841.3px;width:120px;text-align:right;color:#262626">31 (7.0)</div>
<div class="t r" style="left:903.3000000000001px;top:841.3px;width:120px;text-align:right;color:#262626">55 (6.3)</div>
<div class="t" style="left:453.4px;top:852.8px;color:#262626">Visit 12</div>
<div class="t" style="left:491.5px;top:852.8px;color:#262626">HIGH</div>
<div class="t" style="left:664.7px;top:852.8px;color:#262626">HIGH</div>
<div class="t r" style="left:748.9000000000001px;top:852.8px;width:120px;text-align:right;color:#262626">2 (0.5)</div>
<div class="t r" style="left:827.6px;top:852.8px;width:120px;text-align:right;color:#262626">2 (0.5)</div>
<div class="t r" style="left:903.3000000000001px;top:852.8px;width:120px;text-align:right;color:#262626">4 (0.5)</div>
</body></html>
